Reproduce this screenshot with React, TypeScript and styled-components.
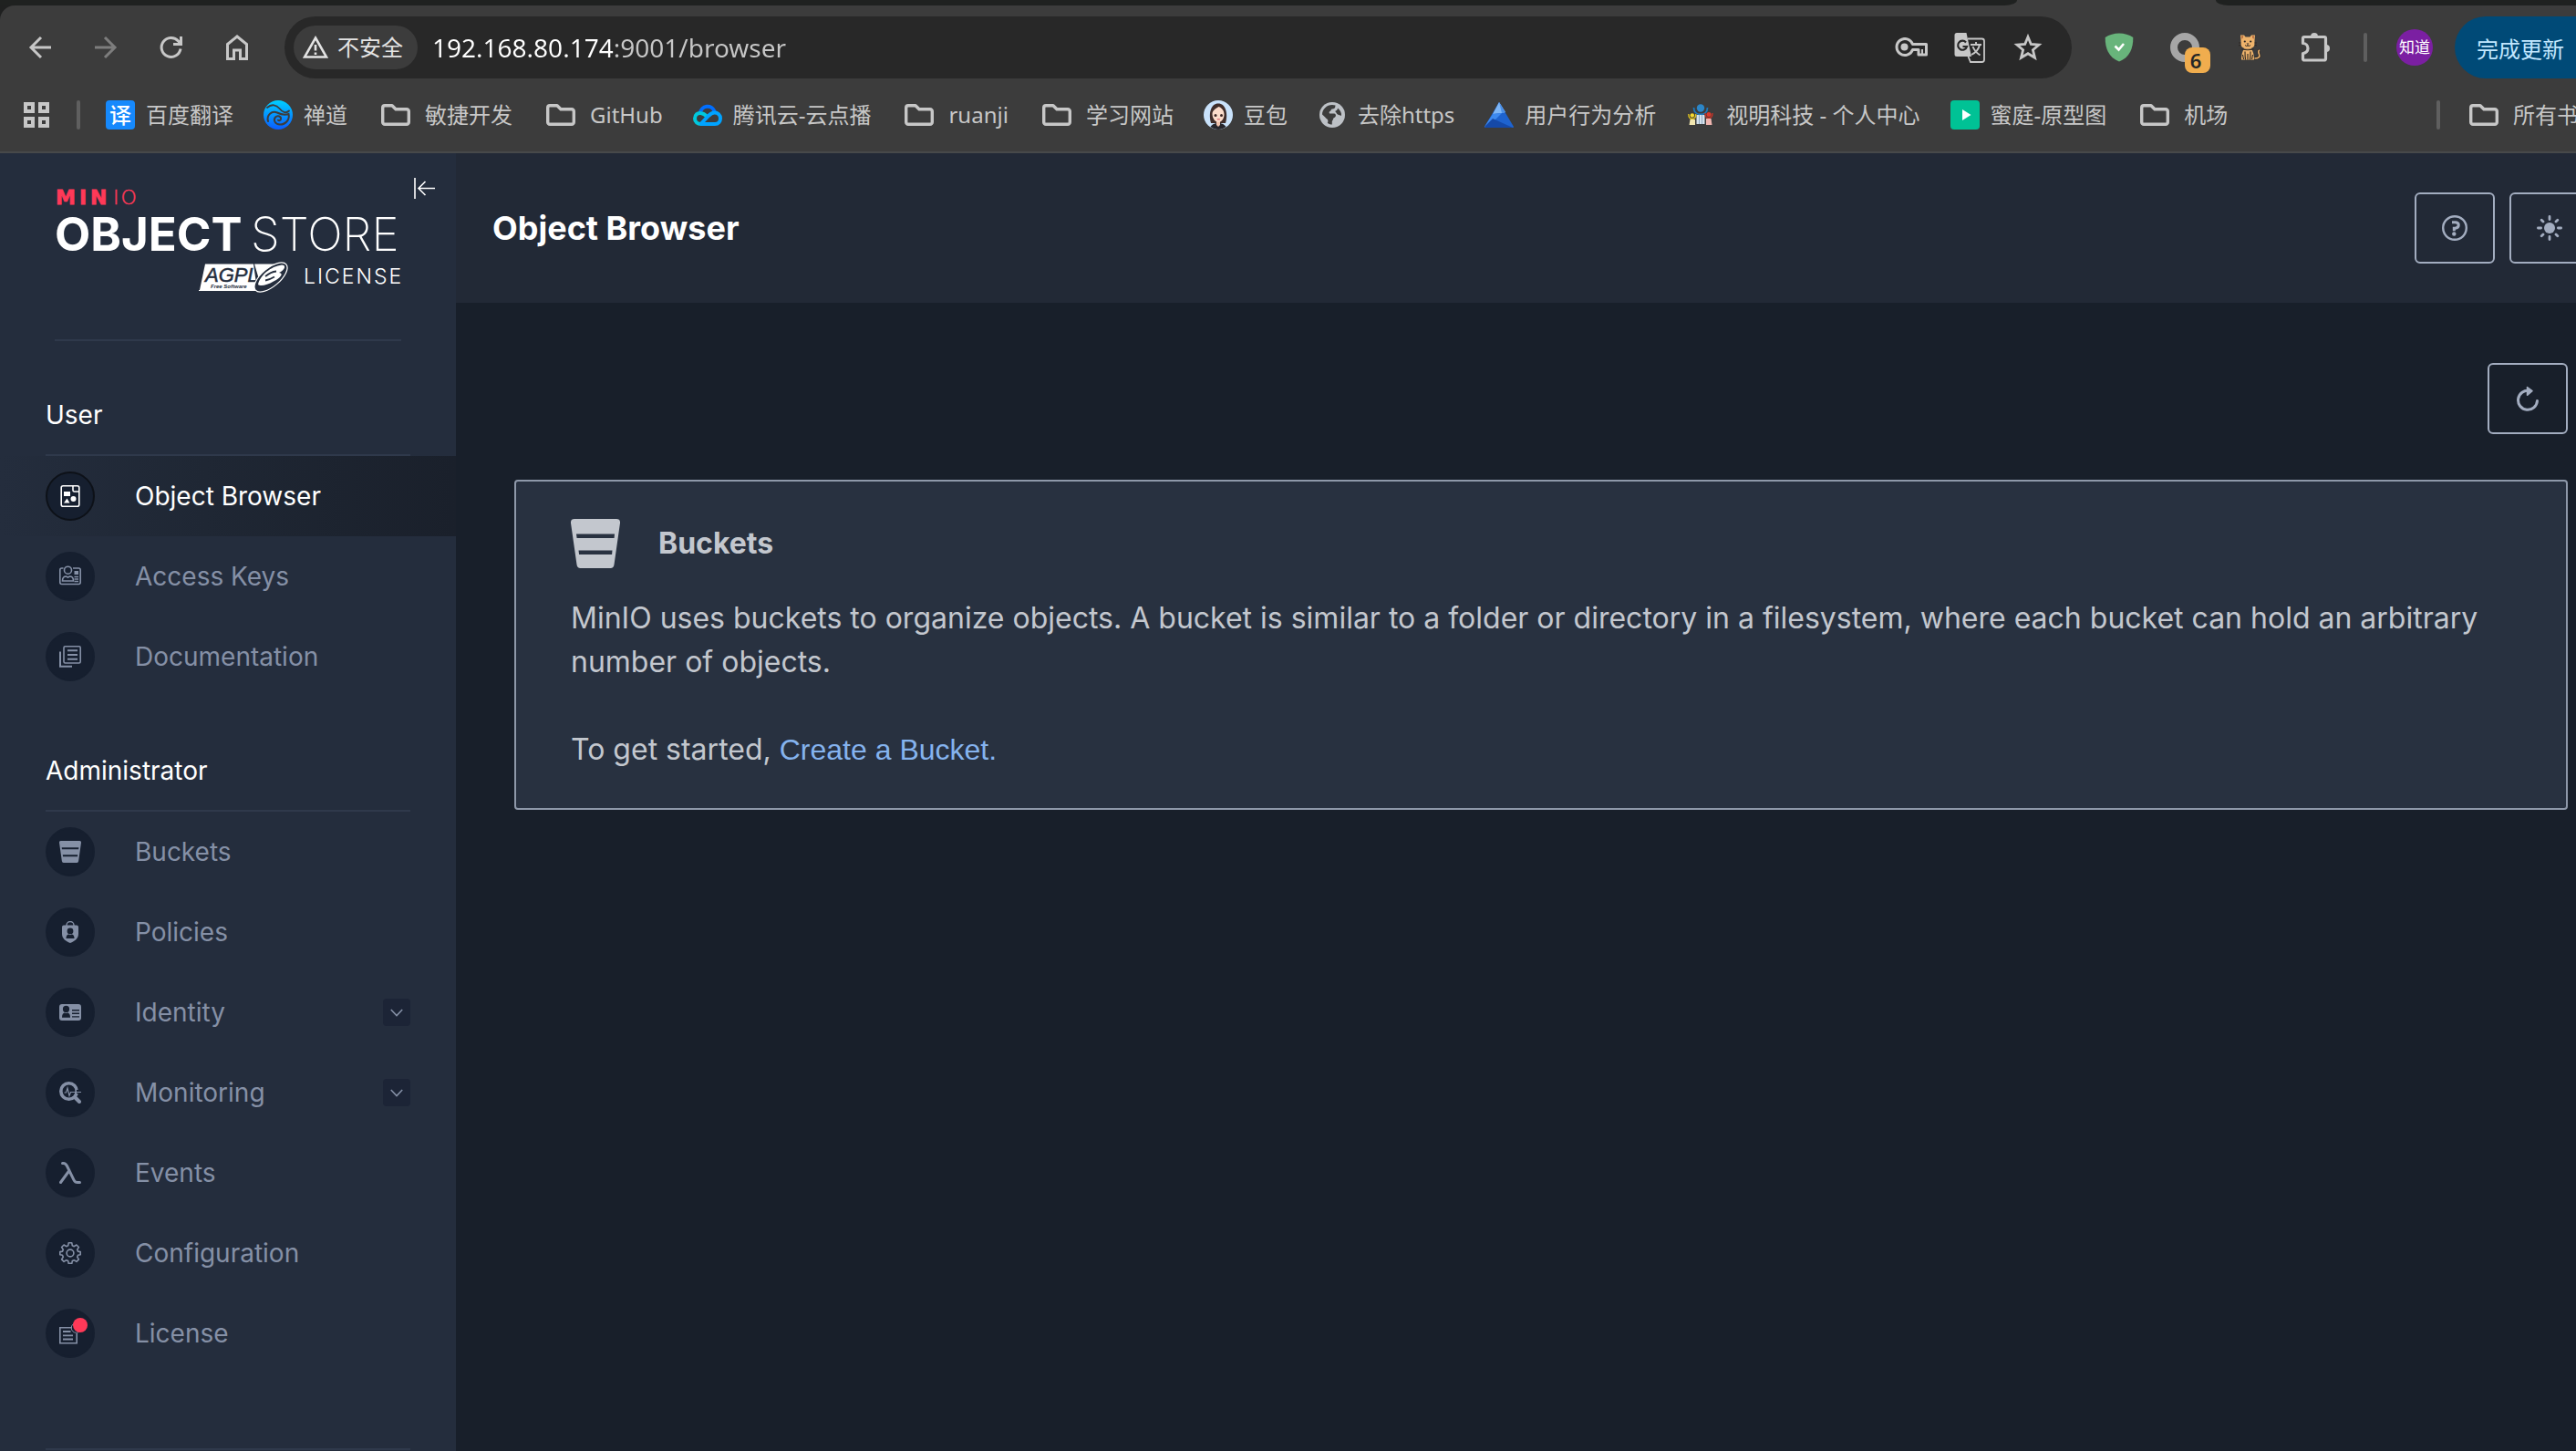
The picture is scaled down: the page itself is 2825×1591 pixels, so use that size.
import React from "react";
import styled, { createGlobalStyle, css } from "styled-components";

const ui = '"Inter", "Liberation Sans", sans-serif';
const chromeFont = '"Noto Sans", "Noto Sans CJK SC", sans-serif';

const Global = createGlobalStyle`
  *, *::before, *::after { box-sizing: border-box; }
  html, body { margin: 0; padding: 0; background: #181f2a; }
  body { overflow: hidden; font-family: ${ui}; }
  button, input { font: inherit; color: inherit; border: 0; padding: 0; margin: 0; background: none; }
  a { color: inherit; text-decoration: none; }
  h1, h2, h3, p, ul { margin: 0; padding: 0; font-weight: inherit; }
  ul { list-style: none; }
  svg { display: block; flex: none; }
`;

/* The window is a little wider than the screen, so its right edge is cut. */
const Window = styled.div`
  display: flex;
  flex-direction: column;
  width: calc(100% + 55px);
  height: 100vh;
  overflow: hidden;
`;

/* ---------- browser chrome ---------- */

const Chrome = styled.header`
  flex: none;
  background: #1f2020;
  font-family: ${chromeFont};
  color: #c7c7c7;
  border-bottom: 2px solid #47494a;
`;

const TabStrip = styled.div`
  display: flex;
  height: 6px;
  background: #3c3c3c;
`;

const StripLeft = styled.div`
  flex: 1;
  background: #1f2120;
  border-bottom-right-radius: 14px 6px;
`;

const StripRight = styled.div`
  flex: 0 0 450px;
  margin-left: 218px;
  background: #1f2120;
  border-bottom-left-radius: 14px 6px;
`;

const Bars = styled.div`
  background: #3c3c3c;
  border-top-left-radius: 16px;
  padding-bottom: 12px;
`;

const Toolbar = styled.div`
  display: flex;
  align-items: center;
  height: 92px;
  padding: 0 16px 0 8px;
`;

const ToolButton = styled.button<{ $w?: number; $dim?: boolean }>`
  display: flex;
  align-items: center;
  justify-content: center;
  flex: none;
  width: ${(p) => p.$w ?? 72}px;
  height: 56px;
  color: ${(p) => (p.$dim ? "#7d7d7d" : "#c7c7c7")};
`;

const Omnibox = styled.div`
  display: flex;
  align-items: center;
  flex: 1;
  min-width: 0;
  height: 68px;
  margin: 0 16px;
  padding: 0 16px 0 10px;
  border-radius: 34px;
  background: #282828;
`;

const SecurityChip = styled.button`
  display: flex;
  align-items: center;
  flex: none;
  gap: 10px;
  height: 48px;
  padding: 0 16px 0 10px;
  border-radius: 24px;
  background: #3c3c3c;
  color: #e3e3e3;
  font-size: 24px;
  line-height: 48px;
`;

const Address = styled.input`
  flex: 1;
  min-width: 0;
  height: 48px;
  margin-left: 16px;
  font-size: 28px;
  outline: none;
  color: #ffffff;
  background-image: linear-gradient(90deg, #ffffff 198px, #c7c7c7 198px);
  -webkit-background-clip: text;
  background-clip: text;
  -webkit-text-fill-color: transparent;
`;

const Divider = styled.span<{ $l: number; $r: number }>`
  flex: none;
  width: 4px;
  height: 32px;
  margin: 0 ${(p) => p.$r}px 0 ${(p) => p.$l}px;
  border-radius: 2px;
  background: #5f5f5f;
`;

const Avatar = styled.button`
  flex: none;
  width: 40px;
  height: 40px;
  border-radius: 50%;
  background: #7b1fa2;
  color: #ffffff;
  font-size: 17px;
  line-height: 40px;
  text-align: center;
`;

const UpdateButton = styled.button`
  flex: none;
  width: 172px;
  height: 68px;
  margin-left: 24px;
  padding-left: 24px;
  border-radius: 34px;
  background: #004a77;
  color: #c2e7ff;
  font-size: 24px;
  text-align: left;
`;

const Bookmarks = styled.nav`
  display: flex;
  align-items: center;
  height: 56px;
  padding: 0 28px 0 26px;
`;

const BookmarkList = styled.ul`
  display: flex;
  align-items: center;
  flex: 1;
  gap: 33px;
`;

const Bookmark = styled.a<{ $folder?: boolean }>`
  display: flex;
  align-items: center;
  flex: none;
  gap: ${(p) => (p.$folder ? 16 : 12)}px;
  padding-left: ${(p) => (p.$folder ? 4 : 0)}px;
  font-size: 24px;
  line-height: 32px;
  white-space: nowrap;
`;

const Slot = styled.span<{ $bg?: string }>`
  display: flex;
  align-items: center;
  justify-content: center;
  flex: none;
  width: 32px;
  height: 32px;
  border-radius: 4px;
  background: ${(p) => p.$bg ?? "none"};
  color: #ffffff;
  font-size: 24px;
  font-weight: 500;
  line-height: 32px;
`;

const Stroke = ({ size = 28, w = 3, children }: { size?: number; w?: number; children: React.ReactNode }) => (
  <svg width={size} height={size} viewBox={`0 0 ${size} ${size}`} fill="none" stroke="currentColor" strokeWidth={w}>
    {children}
  </svg>
);

const FolderIcon = () => (
  <svg width="32" height="32" viewBox="0 0 32 32" fill="none" stroke="#c7c7c7" strokeWidth="3.4" strokeLinejoin="round">
    <path d="M4 5.7h8l4 4h12a2.3 2.3 0 0 1 2.3 2.3v12a2.3 2.3 0 0 1-2.3 2.3H4A2.3 2.3 0 0 1 1.7 24V8A2.3 2.3 0 0 1 4 5.7z" />
  </svg>
);

const ZentaoIcon = () => (
  <svg width="32" height="32" viewBox="0 0 32 32">
    <defs>
      <linearGradient id="zt" x1="0" y1="0" x2="0" y2="1">
        <stop offset="0" stopColor="#00d0ff" />
        <stop offset="1" stopColor="#0a5cff" />
      </linearGradient>
    </defs>
    <circle cx="16" cy="16" r="16" fill="url(#zt)" />
    <path d="M4 8C9 3.500 14 5 17.500 9c3.500 4.500 7.500 5.500 10.500 2.500" fill="none" stroke="#3c3c3c" strokeWidth="1.800" strokeLinecap="round" />
    <path d="M5 23C3 16 9 11 15 13.500c4 2 8 3 12.500 1.500 1.500 6-3 11.500-9.500 11.500-5.500 0-7.500-5-5-8 2.500-2.500 6.500-1 6 2-.3 1.700-2 2-3 1.200" fill="none" stroke="#3c3c3c" strokeWidth="2" strokeLinecap="round" />
  </svg>
);

const TencentIcon = () => (
  <svg width="32" height="32" viewBox="0 0 32 32" fill="none" strokeWidth="4" strokeLinecap="round">
    <path d="M8 14A8 8 0 0 1 23.500 12" stroke="#006eff" />
    <path d="M9 26c-4 0-7-2-7-6s3-6.500 6.500-6c3 .3 5 2 7 4" stroke="#00c8dc" />
    <path d="M9 26h15c4 0 6-3 6-6 0-4-3-6.500-6.500-6.500-3 0-4.500 1.500-6.500 3.500L9 25.500" stroke="#00a3ff" />
  </svg>
);

const GirlIcon = () => (
  <svg width="32" height="32" viewBox="0 0 32 32">
    <circle cx="16" cy="16" r="16" fill="#c9e2fb" />
    <path d="M8 25C5 14 8 3.500 16 3.500S27 14 24 25z" fill="#3f2d2a" />
    <path d="M7.500 29c2-3 5-3.500 6-4h5c1 .5 4 1 6 4-5 4-12 4-17 0z" fill="#25252c" />
    <path d="M14 22h4v5l-2 2-2-2z" fill="#f1c3ae" />
    <path d="M9.500 15c0-4 4-6 7-8 3.500 1.500 6 4 6 8.500 0 5-3.500 8.500-6.500 8.500s-6.500-4-6.500-9z" fill="#fbdccb" />
    <circle cx="13" cy="16.500" r="1.500" fill="#3a2524" />
    <circle cx="19.500" cy="16.500" r="1.500" fill="#3a2524" />
    <path d="M14.800 20.800h3" stroke="#d8606a" strokeWidth="1.200" />
  </svg>
);

const GlobeIcon = () => (
  <svg width="28" height="28" viewBox="0 0 28 28">
    <circle cx="14" cy="14" r="14" fill="#bdc1c6" />
    <path d="M3 13.500C3 8 8 3 14 3c1 0 2.500.2 3.500.6 0 3-1.500 4-3.500 4-1.500 0-1 2-2.500 2.500-1 .5-1 1.500-.5 2.400h5c1.800 0 2.500 2 1.500 3.500-1 1.300-2.500 1-2.500 2.500 0 1.500-1.200 1.500-1.200 3v3c-2 0-4-.8-5-1.800 1-1.500.7-3.200-.5-4.200-1.500-1-2.300-2.500-5.300-5z" fill="#3c3c3c" />
    <path d="M20 6.500c2.500 2 4.500 5 4 8.500-1.500-1-2.500-.5-4-1.500-1.500-1-1.500-2.500-3-3.500 1.500-.5 3-1.500 3-3.500z" fill="#3c3c3c" />
  </svg>
);

const TriangleIcon = () => (
  <svg width="32" height="32" viewBox="0 0 32 32">
    <path d="M16 2 32 29q0 1-1 1H1q-1 0-1-1z" fill="#1e63cf" />
    <path d="M16 2 9 15l10-1 4-1z" fill="#7db6f7" />
    <path d="M16 2l7 11-4 1z" fill="#4a8fe8" />
    <path d="M9 15l10-1-12 12-7 3z" fill="#3d8af0" />
    <path d="M9 20 31 30H1q-1-1 0-2z" fill="#1549a8" />
  </svg>
);

const PeopleIcon = () => (
  <svg width="28" height="28" viewBox="0 0 28 28">
    <circle cx="14" cy="6.500" r="4.200" fill="#2c86c8" />
    <path d="M6.500 6c0 5 3.500 7.500 7.500 7.500s7.500-2.500 7.500-7.500" fill="none" stroke="#1f79bd" strokeWidth="1.800" />
    <path d="M9.500 14h9v10h-9z" fill="#d5e2ee" />
    <path d="M12.500 14v10M15.500 14v10" stroke="#8fa8bd" />
    <circle cx="4.800" cy="14.500" r="2.300" fill="#f3d72f" />
    <path d="M.8 13c0 4 2 5.500 4 5.500s4-1.500 4-5.500" fill="none" stroke="#e6c91e" strokeWidth="1.300" />
    <path d="M2.500 19H8v6H1.500z" fill="#f1e6b0" />
    <circle cx="23" cy="13.500" r="2.500" fill="#dc3a2c" />
    <path d="M19 12c0 4 2 5.500 4 5.500s4-1.500 4-5.500" fill="none" stroke="#c93226" strokeWidth="1.300" />
    <path d="M20 18h5.500l1 7h-6.500z" fill="#efb6b0" />
  </svg>
);

const PlayIcon = () => (
  <svg width="32" height="32" viewBox="0 0 32 32">
    <path d="M13 10l9.500 6-9.500 6z" fill="#fff" />
  </svg>
);

type Mark = { label: string; icon: React.ReactNode; folder?: boolean; bg?: string };
const marks: Mark[] = [
  { label: "百度翻译", icon: "译", bg: "#1689fc" },
  { label: "禅道", icon: <ZentaoIcon /> },
  { label: "敏捷开发", icon: <FolderIcon />, folder: true },
  { label: "GitHub", icon: <FolderIcon />, folder: true },
  { label: "腾讯云-云点播", icon: <TencentIcon /> },
  { label: "ruanji", icon: <FolderIcon />, folder: true },
  { label: "学习网站", icon: <FolderIcon />, folder: true },
  { label: "豆包", icon: <GirlIcon /> },
  { label: "去除https", icon: <GlobeIcon /> },
  { label: "用户行为分析", icon: <TriangleIcon /> },
  { label: "视明科技 - 个人中心", icon: <PeopleIcon /> },
  { label: "蜜庭-原型图", icon: <PlayIcon />, bg: "#00c295" },
  { label: "机场", icon: <FolderIcon />, folder: true },
];

const TranslateIcon = () => (
  <svg width="34" height="34" viewBox="0 0 34 34">
    <path d="M3 1h10.500l5.500 26H3a2.500 2.500 0 0 1-2.500-2.500v-21A2.500 2.500 0 0 1 3 1z" fill="#c7c7c7" />
    <path d="M15 7.500h15.500a2.500 2.500 0 0 1 2.500 2.500v20.500a2.500 2.500 0 0 1-2.500 2.500H18l-2.500-6" fill="none" stroke="#c7c7c7" strokeWidth="1.800" />
    <path d="M13 11.500a5 5 0 1 0 1 4.500H9.500" fill="none" stroke="#282828" strokeWidth="2.200" />
    <path d="M18 14h12M24 11v3M28 14c-1 5-5 9-9 11M20.500 16c1.500 4 4 7 8 9.500" fill="none" stroke="#c7c7c7" strokeWidth="1.900" />
  </svg>
);

const DogIcon = () => (
  <svg width="26" height="30" viewBox="0 0 26 30">
    <path d="M17.500 27c5 0 6-2 5-4.500s-1-4 .5-4.500" fill="none" stroke="#2c2622" strokeWidth="3" />
    <path d="M17.500 27c5 0 6-2 5-4.500s-1-4 .5-4.500" fill="none" stroke="#eeb36b" strokeWidth="1.600" />
    <path d="M6 16.500h8c2 3 3 7 3 12H3c0-5 1-9 3-12z" fill="#eeb36b" />
    <path d="M2 1.500h4l1.500 2h5l1.500-2h4l-.5 6v4c0 3.500-3.500 5-7.500 5s-7.500-1.500-7.500-5v-4z" fill="#eeb36b" />
    <path d="M3 2.500h2.300l-1.500 3.800zM17 2.500h-2.300l1.500 3.800z" fill="#a85a35" />
    <path d="M3.500 16.800q6.500 2 13 0M7 19.500c0 3 0 5.500.5 9M13 19.500c0 3 0 5.500-.5 9M10 22v6.500M4.500 23l1 5M15.500 23l-1 5" fill="none" stroke="#2c2622" strokeWidth="1.100" />
    <circle cx="6.800" cy="8.500" r="1.100" fill="#2c2622" />
    <circle cx="13.200" cy="8.500" r="1.100" fill="#2c2622" />
    <path d="M8.500 10.500h3L10 12z" fill="#2c2622" />
    <path d="M10 12v1M7 12.500q1.500 1.800 3 .5 1.500 1.300 3-.5M0 10h2.500M0 13l2.500-.8M17.500 10H20M17.500 12.200l2.500.8" fill="none" stroke="#2c2622" />
  </svg>
);

const BadgeHolder = styled.span`
  position: relative;
  display: block;
  width: 32px;
  height: 32px;
`;

const Badge = styled.span`
  position: absolute;
  left: 16px;
  top: 16px;
  width: 28px;
  height: 28px;
  padding-right: 4px;
  border-radius: 8px;
  background: #f0ad4e;
  color: #262626;
  font-size: 22px;
  font-weight: 600;
  line-height: 28px;
  text-align: center;
`;

const BrowserChrome = () => (
  <Chrome>
    <TabStrip>
      <StripLeft />
      <StripRight />
    </TabStrip>
    <Bars>
      <Toolbar>
        <ToolButton aria-label="Back">
          <Stroke><path d="M26 14H4M15 3 4 14l11 11" /></Stroke>
        </ToolButton>
        <ToolButton aria-label="Forward" $dim>
          <Stroke><path d="M2 14h22M13 3l11 11-11 11" /></Stroke>
        </ToolButton>
        <ToolButton aria-label="Reload">
          <Stroke><path d="M24 15.500A10.500 10.500 0 1 1 21.500 7l2.500 3.500M24.500 2v8.500H16" /></Stroke>
        </ToolButton>
        <ToolButton aria-label="Home">
          <Stroke><path d="M3.500 26.500V10.500L14 2l10.500 8.500v16h-7V17h-7v9.500z" /></Stroke>
        </ToolButton>
        <Omnibox>
          <SecurityChip>
            <Stroke w={2.600}>
              <path d="M14 3.500 26 24.500H2z" />
              <path d="M14 11v6.500M14 19.500v2.500" />
            </Stroke>
            不安全
          </SecurityChip>
          <Address aria-label="Address" defaultValue="192.168.80.174:9001/browser" />
          <ToolButton aria-label="Passwords" $w={64}>
            <svg width="36" height="22" viewBox="0 0 36 22" fill="none" stroke="currentColor" strokeWidth="3">
              <path d="M19.500 7.500A9 9 0 1 0 19.500 13.500H26v5.500h8.500V7.500z" strokeLinejoin="round" />
              <circle cx="10.500" cy="10.500" r="4" fill="currentColor" stroke="none" />
              <path d="M30 13v6" strokeWidth="2" />
            </svg>
          </ToolButton>
          <ToolButton aria-label="Translate" $w={64}><TranslateIcon /></ToolButton>
          <ToolButton aria-label="Bookmark this page" $w={64}>
            <svg width="32" height="32" viewBox="0 0 32 32" fill="none" stroke="currentColor" strokeWidth="2.800">
              <path d="M16 4.500l3.300 8 8.700.7-6.600 5.600 2.100 8.400L16 22.700l-7.500 4.500 2.100-8.400L4 13.200l8.700-.7z" />
            </svg>
          </ToolButton>
        </Omnibox>
        <ToolButton aria-label="Shield">
          <svg width="32" height="32" viewBox="0 0 32 32">
            <path d="M16 .5c5.500 0 11 1.500 15.300 4.500C31.500 17 27.500 27 16 31.500 4.500 27 .5 17 .7 5 5 2 10.500.5 16 .5z" fill="#68b47b" />
            <path d="M11.500 14.500l4 4 5.500-6.500" fill="none" stroke="#fff" strokeWidth="2.600" />
          </svg>
        </ToolButton>
        <ToolButton aria-label="Downloads">
          <BadgeHolder>
            <svg width="32" height="32" viewBox="0 0 32 32"><circle cx="16" cy="16" r="12" fill="none" stroke="#a6a6a6" strokeWidth="8" /></svg>
            <Badge>6</Badge>
          </BadgeHolder>
        </ToolButton>
        <ToolButton aria-label="Dog"><DogIcon /></ToolButton>
        <ToolButton aria-label="Extensions">
          <svg width="34" height="34" viewBox="0 0 34 34">
            <path d="M4 5.500h22a1.500 1.500 0 0 1 1.500 1.500v22.500a1.500 1.500 0 0 1-1.500 1.500H4a1.500 1.500 0 0 1-1.500-1.500v-6a5.500 5.500 0 0 0 0-11V7A1.500 1.500 0 0 1 4 5.500z" fill="none" stroke="currentColor" strokeWidth="3.200" strokeLinejoin="round" />
            <path d="M11 5a4 4 0 0 1 8 0zM28 14a4 4 0 0 1 0 8z" fill="currentColor" />
          </svg>
        </ToolButton>
        <Divider $l={16} $r={32} />
        <Avatar>知道</Avatar>
        <UpdateButton>完成更新</UpdateButton>
      </Toolbar>
      <Bookmarks aria-label="Bookmarks">
        <ToolButton aria-label="Apps" $w={28}>
          <Stroke w={4}>
            <path d="M2 2h8v8H2zM18 2h8v8h-8zM2 18h8v8H2zM18 18h8v8h-8z" />
          </Stroke>
        </ToolButton>
        <Divider $l={30} $r={28} />
        <BookmarkList>
          {marks.map((m) => (
            <li key={m.label}>
              <Bookmark href="#" $folder={m.folder}>
                <Slot $bg={m.bg}>{m.icon}</Slot>
                {m.label}
              </Bookmark>
            </li>
          ))}
        </BookmarkList>
        <Divider $l={0} $r={28} />
        <Bookmark href="#" $folder>
          <Slot><FolderIcon /></Slot>
          所有书签
        </Bookmark>
      </Bookmarks>
    </Bars>
  </Chrome>
);

/* ---------- console ---------- */

const Console = styled.div`
  display: flex;
  flex: 1;
  min-height: 0;
`;

const Sidebar = styled.aside`
  flex: 0 0 500px;
  overflow: hidden;
  background: #242d3d;
`;

const LogoBlock = styled.div`
  display: flex;
  align-items: flex-start;
  gap: 14px;
  margin: 0 23px 0 60px;
  padding-top: 27px;
`;

const Logo = styled.a`
  display: block;
  width: 380px;
  height: 179px;
  border-bottom: 2px solid #2f394b;
`;

const CollapseButton = styled.button`
  flex: none;
  width: 23px;
  height: 24px;
  color: #ffffff;
`;

const GroupTitle = styled.h2`
  height: 126px;
  margin: 0 50px;
  padding-top: 60px;
  border-bottom: 2px solid #2f394b;
  color: #ffffff;
  font-size: 28px;
  line-height: 42px;
`;

const NavItem = styled.a<{ $active?: boolean }>`
  display: flex;
  align-items: center;
  height: 88px;
  padding: 0 50px;
  color: #8590a6;
  font-size: 28px;
  ${(p) =>
    p.$active &&
    css`
      color: #ffffff;
      background: linear-gradient(90deg, #242d3d 0%, #1f2734 45%, #1a202b 100%);
    `}
`;

const IconDisc = styled.span<{ $active?: boolean }>`
  position: relative;
  display: flex;
  align-items: center;
  justify-content: center;
  flex: none;
  width: 54px;
  height: 54px;
  margin-right: 44px;
  border-radius: 50%;
  border: 2px solid ${(p) => (p.$active ? "#0d1118" : "#161f2f")};
  background: #161f2f;
`;

const AlertDot = styled.span`
  position: absolute;
  top: 8px;
  right: 6px;
  width: 16px;
  height: 16px;
  border-radius: 50%;
  background: #ff3958;
`;

const NavLabel = styled.span`
  flex: 1;
`;

const Expander = styled.span`
  display: flex;
  align-items: center;
  justify-content: center;
  width: 30px;
  height: 30px;
  border-radius: 4px;
  background: #1c2436;
`;

const SidebarFoot = styled.div`
  height: 90px;
  margin: 82px 50px 0;
  border-top: 2px solid #2f394b;
`;

const MinioLogo = () => (
  <svg width="380" height="130" viewBox="0 0 380 130" role="img" aria-label="MinIO Object Store, AGPL v3 license">
    <g fill="#ff3958" stroke="#ff3958" fontFamily="DejaVu Sans" fontSize="22">
      <text x="1" y="29" fontWeight="700" strokeWidth=".8" letterSpacing="4">MIN</text>
      <text x="64" y="29" fontWeight="200" strokeWidth=".5" letterSpacing="2">IO</text>
    </g>
    <g fill="#fff" fontFamily="Inter" fontSize="51">
      <text x="0" y="80" fontWeight="700">OBJECT</text>
      <text x="215" y="80" fontWeight="200">STORE</text>
    </g>
    <path d="M165 94.500h53l4 28.500h-63z" fill="#fff" />
    <path d="M219 94.500h31q-17 4-25 20z" fill="#fff" />
    <path d="M158 123.500h65" fill="none" stroke="#fff" />
    <g fill="#242d3d" fontFamily="Liberation Sans" fontStyle="italic">
      <text x="165" y="114" fontSize="22" stroke="#242d3d" strokeWidth=".5">AGPL</text>
      <text x="171" y="121" fontSize="6" fontWeight="700">Free Software</text>
    </g>
    <ellipse cx="237" cy="109" rx="22" ry="10" fill="#242d3d" stroke="#fff" strokeWidth="1.200" transform="rotate(-40 237 109)" />
    <path d="M223 117c2-10 14-20 26-21.500 5 0 4 5-3 8.500 6 1 1 6-6 9.500-7 4-14 6-17 3.500z" fill="#fff" />
    <path d="M231 108q6-5 12-5.500M231 112.500q5-1 10-4" fill="none" stroke="#242d3d" strokeWidth="1.800" />
    <text x="273" y="116" fill="#fff" fontFamily="Inter" fontSize="23" fontWeight="300" letterSpacing="2">LICENSE</text>
  </svg>
);

const BucketIcon = ({ size = 24 }: { size?: number }) => (
  <svg width={size} height={size} viewBox="0 0 54 54" fill="currentColor">
    <path fillRule="evenodd" d="M4 0h46q4.400 0 4 4.500L47.500 50q-.5 4-4 4h-33q-3.500 0-4-4L0 4.500Q-.4 0 4 0zM6 16.500l.6 4.500h41l.4-4.500zM8.500 34.500l.6 4.500h36l.4-4.500z" />
  </svg>
);

const Glyph = ({ children }: { children: React.ReactNode }) => (
  <svg width="24" height="24" viewBox="0 0 24 24" fill="none" stroke="currentColor" strokeWidth="1.600">
    {children}
  </svg>
);

const BrowserGlyph = () => (
  <Glyph>
    <rect x="2.200" y=".8" width="19.600" height="22.400" rx="2" />
    <path d="M15 1v4.500q0 1.500 1.500 1.500H22" />
    <path d="M5 7h7v5H5zM5 19.500l3.500-5 3 5z" fill="currentColor" stroke="none" />
    <circle cx="15.500" cy="15" r="3" fill="currentColor" stroke="none" />
  </Glyph>
);

const KeysGlyph = () => (
  <Glyph>
    <path d="M4.500 3H2.800Q.8 3 .8 5v13.500q0 2 2 2h18.400q2 0 2-2V5q0-2-2-2H15" />
    <circle cx="9.500" cy="5.200" r="4" />
    <path d="M3.500 17c0-4 2-5 4-5l2 1 2-1c2 0 4 1 4 5z" />
    <path d="M16.500 6H21v4h-4.500z" fill="currentColor" stroke="none" />
    <path d="M16.500 12.500H21M16.500 15H21M16.500 17.500H21" strokeWidth="1.500" />
  </Glyph>
);

const DocsGlyph = () => (
  <Glyph>
    <rect x="5" y=".8" width="18.200" height="18.200" rx="1.500" />
    <path d="M1 6.500v16.300h13" strokeWidth="2" />
    <path d="M9 5.300h11M9 10h11M9 14.800h11" strokeWidth="2" />
  </Glyph>
);

const PolicyGlyph = () => (
  <Glyph>
    <path d="M8 6V4.500a4 4 0 0 1 8 0V6" strokeWidth="1.400" />
    <path fillRule="evenodd" d="M5 4.500h14q2 0 2 2V14c0 5-4 8-9 10-5-2-9-5-9-10V6.500q0-2 2-2zM12 7.500a3.400 3.400 0 1 0 0 6.800 3.400 3.400 0 0 0 0-6.800zM7.500 19h9q0-4-2.500-4.500l-2 .8-2-.8Q7.500 15 7.500 19z" fill="currentColor" stroke="none" />
  </Glyph>
);

const IdentityGlyph = () => (
  <Glyph>
    <path fillRule="evenodd" d="M3 3h18q3 0 3 3v12q0 3-3 3H3q-3 0-3-3V6q0-3 3-3zM7.500 4.800a3.600 3.600 0 1 0 0 7.200 3.600 3.600 0 0 0 0-7.200zM3 17.800h9q0-5-3-5.300l-1.500.5-1.500-.5q-3 .3-3 5.300zM14 9v1.400h8V9zM14 12.600V14h8v-1.400zM14 16.200v1.400h8v-1.400z" fill="currentColor" stroke="none" />
  </Glyph>
);

const MonitorGlyph = () => (
  <Glyph>
    <circle cx="10.500" cy="10.500" r="8.700" strokeWidth="3.600" />
    <path d="M17.500 17.500l4.500 4.500" strokeWidth="4" strokeLinecap="round" />
    <path d="M19 11h5" stroke="#161f2f" strokeWidth="4" />
    <path d="M5.500 12h2L9 7l2 8.500 1.500-4H24" strokeWidth="1.200" />
  </Glyph>
);

const LambdaGlyph = () => (
  <Glyph>
    <path d="M3.500 1.500h1c2 0 3 1 4 3L16 19.800c1 2 2 2.700 4 2.700h2.500M11 9.500 1.500 22.500" strokeWidth="3" strokeLinecap="round" />
  </Glyph>
);

const GearGlyph = () => (
  <Glyph>
    <path d="M10.200.8h3.600l.5 3 2 .9 2.600-1.700 2.500 2.500-1.700 2.600.8 2 2.700.5v3.200l-2.700.5-.8 2 1.700 2.600-2.500 2.500-2.600-1.700-2 .9-.5 2.800h-3.600l-.5-2.800-2-.9L5.100 21.400l-2.500-2.500 1.700-2.600-.8-2-2.700-.5v-3.200l2.700-.5.8-2-1.700-2.600L5.100 3l2.600 1.700 2-.9z" strokeLinejoin="round" />
    <circle cx="12" cy="12" r="3.900" />
  </Glyph>
);

const LicenseGlyph = () => (
  <Glyph>
    <path d="M14 5.700H.8v17h18.400V12" />
    <circle cx="18.500" cy="6" r="5.300" strokeWidth="1" />
    <path d="M4 10h8.500M4 14.300h11M4 18.500h11" strokeWidth="1.800" />
  </Glyph>
);

type Item = { label: string; icon: React.ReactNode; active?: boolean; expandable?: boolean; alert?: boolean };
const userItems: Item[] = [
  { label: "Object Browser", icon: <BrowserGlyph />, active: true },
  { label: "Access Keys", icon: <KeysGlyph /> },
  { label: "Documentation", icon: <DocsGlyph /> },
];
const adminItems: Item[] = [
  { label: "Buckets", icon: <BucketIcon /> },
  { label: "Policies", icon: <PolicyGlyph /> },
  { label: "Identity", icon: <IdentityGlyph />, expandable: true },
  { label: "Monitoring", icon: <MonitorGlyph />, expandable: true },
  { label: "Events", icon: <LambdaGlyph /> },
  { label: "Configuration", icon: <GearGlyph /> },
  { label: "License", icon: <LicenseGlyph />, alert: true },
];

const NavGroup = ({ title, items }: { title: string; items: Item[] }) => (
  <nav aria-label={title}>
    <GroupTitle>{title}</GroupTitle>
    {items.map((it) => (
      <NavItem key={it.label} href="#" $active={it.active}>
        <IconDisc $active={it.active}>
          {it.icon}
          {it.alert && <AlertDot />}
        </IconDisc>
        <NavLabel>{it.label}</NavLabel>
        {it.expandable && (
          <Expander>
            <svg width="14" height="9" viewBox="0 0 14 9" fill="none" stroke="currentColor" strokeWidth="1.600">
              <path d="M.8 1 7 7.500 13.200 1" />
            </svg>
          </Expander>
        )}
      </NavItem>
    ))}
  </nav>
);

const Main = styled.main`
  flex: 1;
  min-width: 0;
  background: #181f2a;
`;

const PageHeader = styled.div`
  display: flex;
  align-items: center;
  gap: 16px;
  height: 164px;
  padding: 0 40px;
  background: #222936;
`;

const PageTitle = styled.h1`
  flex: 1;
  color: #ffffff;
  font-size: 36px;
  font-weight: 700;
`;

const OutlineButton = styled.button`
  display: flex;
  align-items: center;
  justify-content: center;
  width: 88px;
  height: 78px;
  border: 2px solid #a3adc0;
  border-radius: 6px;
  color: #a3adc0;
`;

const Content = styled.div`
  display: flex;
  flex-direction: column;
  align-items: flex-end;
  gap: 50px;
  padding: 66px 64px;
`;

const Card = styled.section`
  width: 100%;
  padding: 40px 60px;
  border: 2px solid #8e98a9;
  border-radius: 4px;
  background: #283140;
  color: #c3c7ce;
  font-size: 32px;
  line-height: 48px;
`;

const CardHead = styled.h2`
  display: flex;
  align-items: center;
  gap: 42px;
  height: 56px;
  margin-bottom: 30px;
  font-size: 32px;
  font-weight: 700;
`;

const CardText = styled.p`
  & + & {
    margin-top: 48px;
  }
`;

const CreateLink = styled.a`
  color: #85b3ee;
  font-family: "Liberation Sans", Arial, sans-serif;
`;

export default function App() {
  return (
    <>
      <Global />
      <Window>
        <BrowserChrome />
        <Console>
          <Sidebar>
            <LogoBlock>
              <Logo href="#"><MinioLogo /></Logo>
              <CollapseButton aria-label="Collapse menu">
                <svg width="23" height="24" viewBox="0 0 23 24" fill="none" stroke="currentColor" strokeWidth="1.600">
                  <path d="M1 0v23M23 11.500H5.500M12.500 4 5 11.500l7.500 7.500" />
                </svg>
              </CollapseButton>
            </LogoBlock>
            <NavGroup title="User" items={userItems} />
            <NavGroup title="Administrator" items={adminItems} />
            <SidebarFoot />
          </Sidebar>
          <Main>
            <PageHeader>
              <PageTitle>Object Browser</PageTitle>
              <OutlineButton aria-label="Help">
                <svg width="28" height="28" viewBox="0 0 28 28" fill="none" stroke="currentColor">
                  <circle cx="14" cy="14" r="12.800" strokeWidth="2.400" />
                  <path d="M11 7.800h3.500c5 0 5 6 0 6.500H13.300v3" strokeWidth="3" />
                  <circle cx="13.300" cy="20.500" r="2.200" fill="currentColor" stroke="none" />
                </svg>
              </OutlineButton>
              <OutlineButton aria-label="Light mode">
                <svg width="28" height="28" viewBox="0 0 28 28" fill="none" stroke="currentColor" strokeWidth="2.800" strokeLinecap="round">
                  <circle cx="14" cy="14" r="6" fill="currentColor" stroke="none" />
                  <path d="M14 1.400v3.200M14 23.400v3.200M1.400 14h3.200M23.400 14h3.200M5.200 5.200l1.800 1.800M21 21l1.800 1.800M5.200 22.800 7 21M21 7l1.800-1.800" />
                </svg>
              </OutlineButton>
            </PageHeader>
            <Content>
              <OutlineButton aria-label="Refresh">
                <svg width="28" height="28" viewBox="0 0 28 28" fill="none" stroke="currentColor" strokeWidth="3" strokeLinecap="round">
                  <path d="M24.500 16.500A10.500 10.500 0 1 1 16 5.500" />
                  <path d="M13.500 1.500 19 5.700l-5.500 4.600z" fill="currentColor" strokeWidth="1.500" strokeLinejoin="round" />
                </svg>
              </OutlineButton>
              <Card>
                <CardHead>
                  <BucketIcon size={54} />
                  Buckets
                </CardHead>
                <CardText>
                  MinIO uses buckets to organize objects. A bucket is similar to a folder or directory in a filesystem,
                  where each bucket can hold an arbitrary number of objects.
                </CardText>
                <CardText>
                  To get started, <CreateLink href="#">Create a Bucket.</CreateLink>
                </CardText>
              </Card>
            </Content>
          </Main>
        </Console>
      </Window>
    </>
  );
}
